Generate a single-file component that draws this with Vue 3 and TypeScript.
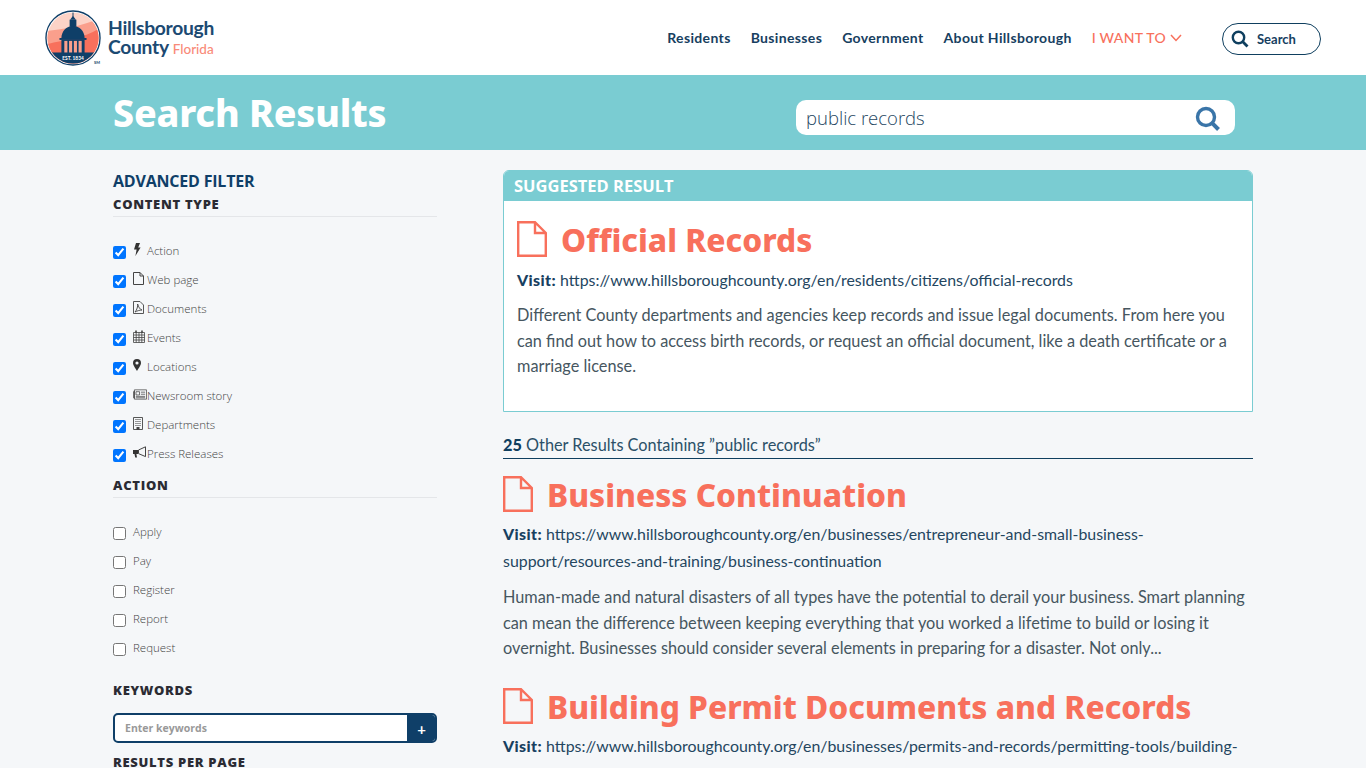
<script setup lang="ts">
const contentTypes = [
  { label: 'Action', icon: 'bolt' },
  { label: 'Web page', icon: 'file' },
  { label: 'Documents', icon: 'pdf' },
  { label: 'Events', icon: 'cal' },
  { label: 'Locations', icon: 'pin' },
  { label: 'Newsroom story', icon: 'news' },
  { label: 'Departments', icon: 'bldg' },
  { label: 'Press Releases', icon: 'horn' },
]
const actions = ['Apply', 'Pay', 'Register', 'Report', 'Request']
const nav = ['Residents', 'Businesses', 'Government', 'About Hillsborough']
</script>

<template>
  <div class="page">
    <header class="top">
      <div class="logo">
        <svg class="seal" width="56" height="56" viewBox="0 0 58 58">
          <defs>
            <clipPath id="sealClip"><circle cx="29" cy="29" r="26.5" /></clipPath>
          </defs>
          <circle cx="29" cy="29" r="28" fill="#fff" stroke="#0f3f68" stroke-width="1.4" />
          <g clip-path="url(#sealClip)">
            <rect x="0" y="0" width="58" height="58" fill="#fcd3c7" />
            <path d="M0 22C16 20 36 18 58 8V58H0Z" fill="#fa9f8c" />
            <path d="M0 36C20 30 40 30 58 18V58H0Z" fill="#f8705c" />
            <rect x="0" y="44" width="58" height="15" fill="#0f3f68" />
            <path d="M17 29C17 22 22 17 29 16C36 17 41 22 41 29Z" fill="#0f3f68" />
            <rect x="25.5" y="10" width="7" height="7" fill="#0f3f68" />
            <path d="M26 10L29 6L32 10Z" fill="#0f3f68" />
            <rect x="28.5" y="2" width="1" height="5" fill="#0f3f68" />
            <rect x="15" y="29" width="28" height="2" fill="#0f3f68" />
            <rect x="17" y="31" width="24" height="14" fill="#0f3f68" />
            <rect x="20" y="32" width="3.2" height="12" fill="#fa9f8c" />
            <rect x="24.9" y="32" width="3.2" height="12" fill="#fa9f8c" />
            <rect x="29.9" y="32" width="3.2" height="12" fill="#fa9f8c" />
            <rect x="34.8" y="32" width="3.2" height="12" fill="#fa9f8c" />
          </g>
          <text x="29" y="51.5" text-anchor="middle" font-size="5" font-weight="700" fill="#fff" font-family="Lato, sans-serif">EST. 1834</text>
        </svg>
        <span class="tm">SM</span>
        <div class="wordmark">
          <div>Hillsborough</div>
          <div>County <span class="fl">Florida</span></div>
        </div>
      </div>
      <nav class="nav">
        <a v-for="n in nav" :key="n" class="nav-link">{{ n }}</a>
        <a class="nav-want">I WANT TO
          <svg width="12" height="8" viewBox="0 0 12 8"><path d="M1 1L6 6.5L11 1" fill="none" stroke="#f8705c" stroke-width="1.5" /></svg>
        </a>
        <div class="pill">
          <svg width="18" height="18" viewBox="0 0 18 18"><circle cx="7.5" cy="7.5" r="5.7" fill="none" stroke="#0f3f5f" stroke-width="2.4" /><path d="M11.8 11.8L16.5 16.5" stroke="#0f3f5f" stroke-width="2.8" /></svg>
          <span>Search</span>
        </div>
      </nav>
    </header>

    <section class="band">
      <h1>Search Results</h1>
      <div class="bigsearch">
        <span>public records</span>
        <svg width="26" height="26" viewBox="0 0 26 26"><circle cx="11" cy="11" r="8.5" fill="none" stroke="#3a75a8" stroke-width="3.4" /><path d="M17.2 17.2L23.5 23.5" stroke="#3a75a8" stroke-width="4" /></svg>
      </div>
    </section>

    <div class="body">
      <aside class="side">
        <div class="adv">ADVANCED FILTER</div>
        <div class="sect">CONTENT TYPE</div>
        <div class="list first">
          <label v-for="c in contentTypes" :key="c.label" class="row">
            <input type="checkbox" checked />
            <span class="ic">
              <svg v-if="c.icon === 'bolt'" width="8" height="13" viewBox="0 0 8 13"><path d="M3 0H7L5.2 4.5H7.6L2.4 13L3.6 6.6H1Z" fill="#333" /></svg>
              <svg v-else-if="c.icon === 'file'" width="11" height="13" viewBox="0 0 11 13"><path d="M.5.5H7L10.5 4V12.5H.5ZM7 .5V4H10.5" fill="none" stroke="#444" /></svg>
              <svg v-else-if="c.icon === 'pdf'" width="11" height="13" viewBox="0 0 11 13"><path d="M.5.5H7L10.5 4V12.5H.5ZM2 11C4 9 5 5 4.6 3C5.5 6 7 8.5 9 9C6.5 9 4 10 2 11Z" fill="none" stroke="#444" stroke-width=".9" /></svg>
              <svg v-else-if="c.icon === 'cal'" width="12" height="13" viewBox="0 0 12 13"><path d="M.5 2.5H11.5V12.5H.5ZM.5 5H11.5M.5 7.5H11.5M.5 10H11.5M3.2 2.5V12.5M6 2.5V12.5M8.8 2.5V12.5" fill="none" stroke="#444" stroke-width=".8" /><path d="M3 .5V3M9 .5V3" stroke="#444" stroke-width="1.6" /></svg>
              <svg v-else-if="c.icon === 'pin'" width="8" height="12" viewBox="0 0 8 12"><path fill-rule="evenodd" d="M4 0A4 4 0 0 1 8 4C8 6.5 5 10 4 12C3 10 0 6.5 0 4A4 4 0 0 1 4 0ZM4 2.4A1.6 1.6 0 1 0 4 5.6A1.6 1.6 0 1 0 4 2.4Z" fill="#333" /></svg>
              <svg v-else-if="c.icon === 'news'" width="15" height="11" viewBox="0 0 15 11"><path d="M1.5 1.5V9.5A1 1 0 0 1 .5 8.5V2.5H1.5M1.5.5H14.5V10.5H1.5ZM3.2 2.5H7V6H3.2ZM8.5 3H13M8.5 5.2H13M3 7.5H13M3 9H13" fill="none" stroke="#444" stroke-width=".8" /></svg>
              <svg v-else-if="c.icon === 'bldg'" width="10" height="13" viewBox="0 0 10 13"><path d="M.5.5H9.5V12.5H.5ZM2.4 2.5H3.6M4.4 2.5H5.6M6.4 2.5H7.6M2.4 4.5H3.6M4.4 4.5H5.6M6.4 4.5H7.6M2.4 6.5H3.6M4.4 6.5H5.6M6.4 6.5H7.6M2.4 8.5H3.6M4.4 8.5H5.6M6.4 8.5H7.6" fill="none" stroke="#444" stroke-width=".9" /><rect x="3.5" y="10" width="3" height="3" fill="#444" /></svg>
              <svg v-else width="14" height="12" viewBox="0 0 14 12"><path d="M0 4H5V8H3.4L4 11.5H2.2L1.5 8H0Z" fill="#333" /><path d="M5.5 4L12.5 .8V10.6L5.5 7.6Z" fill="none" stroke="#444" /></svg>
            </span>
            <span class="lbl">{{ c.label }}</span>
          </label>
        </div>
        <div class="sect">ACTION</div>
        <div class="list second">
          <label v-for="a in actions" :key="a" class="row">
            <input type="checkbox" />
            <span class="lbl">{{ a }}</span>
          </label>
        </div>
        <div class="sect plain kw">KEYWORDS</div>
        <div class="kwbox">
          <div class="kwin">Enter keywords</div>
          <div class="kwbtn">+</div>
        </div>
        <div class="sect plain rpp">RESULTS PER PAGE</div>
      </aside>

      <main class="main">
        <div class="card">
          <div class="card-head">SUGGESTED RESULT</div>
          <div class="card-body">
            <div class="title">
              <svg class="doc" width="30" height="36" viewBox="0 0 30 36"><path d="M1.2 1.2H18L28.8 12V34.8H1.2ZM18 1.2V12H28.8" fill="none" stroke="#f8705c" stroke-width="2.4" /></svg>
              <h2>Official Records</h2>
            </div>
            <p class="visit"><b>Visit:</b> https://www.hillsboroughcounty.org/en/residents/citizens/official-records</p>
            <p class="desc">Different County departments and agencies keep records and issue legal documents. From here you can find out how to access birth records, or request an official document, like a death certificate or a marriage license.</p>
          </div>
        </div>

        <div class="count"><b>25</b> Other Results Containing ”public records”</div>

        <article class="result">
          <div class="title">
            <svg class="doc" width="30" height="36" viewBox="0 0 30 36"><path d="M1.2 1.2H18L28.8 12V34.8H1.2ZM18 1.2V12H28.8" fill="none" stroke="#f8705c" stroke-width="2.4" /></svg>
            <h2>Business Continuation</h2>
          </div>
          <p class="visit"><b>Visit:</b> https://www.hillsboroughcounty.org/en/businesses/entrepreneur-and-small-business-<br />support/resources-and-training/business-continuation</p>
          <p class="desc">Human-made and natural disasters of all types have the potential to derail your business. Smart planning can mean the difference between keeping everything that you worked a lifetime to build or losing it overnight. Businesses should consider several elements in preparing for a disaster. Not only...</p>
        </article>

        <article class="result next">
          <div class="title">
            <svg class="doc" width="30" height="36" viewBox="0 0 30 36"><path d="M1.2 1.2H18L28.8 12V34.8H1.2ZM18 1.2V12H28.8" fill="none" stroke="#f8705c" stroke-width="2.4" /></svg>
            <h2>Building Permit Documents and Records</h2>
          </div>
          <p class="visit"><b>Visit:</b> https://www.hillsboroughcounty.org/en/businesses/permits-and-records/permitting-tools/building-<br />permit-documents-and-records</p>
        </article>
      </main>
    </div>
  </div>
</template>

<style>
html, body { margin: 0; overflow: hidden; background: #f5f7f9; }
</style>

<style scoped>
.page { width: 1366px; height: 768px; overflow: hidden; background: #f5f7f9; font-family: Lato, "Open Sans", sans-serif; color: #0f3f5f; }
.top { height: 75px; background: #fff; display: flex; align-items: center; justify-content: space-between; padding: 0 45px; box-sizing: border-box; }
.logo { display: flex; align-items: center; position: relative; margin-top: 3px; }
.seal { display: block; margin-top: -3px; }
.tm { position: absolute; left: 49px; top: 47px; font-size: 4px; font-weight: 700; color: #0f3f68; }
.wordmark { margin: -2px 0 0 7px; font-size: 19.3px; line-height: 19px; font-weight: 700; color: #1c4a72; letter-spacing: -.3px; }
.fl { font-size: 13.5px; color: #f98a78; font-weight: 500; letter-spacing: 0; }
.nav { display: flex; align-items: center; }
.nav-link { font-size: 14px; font-weight: 700; color: #17405f; margin-right: 20px; letter-spacing: .35px; }
.nav-want { font-size: 14px; font-weight: 500; color: #f8705c; letter-spacing: .3px; display: flex; align-items: center; gap: 4px; margin-right: 40px; }
.pill { width: 99px; height: 32px; margin-top: 2px; box-sizing: border-box; border: 1.5px solid #0f3f5f; border-radius: 16px; display: flex; align-items: center; padding-left: 8px; gap: 8px; font-size: 13px; font-weight: 700; color: #17405f; }
.band { height: 75px; background: #7accd2; display: flex; align-items: center; padding: 0 131px 0 113px; justify-content: space-between; }
h1 { margin: 0; font-size: 37.5px; font-weight: 800; color: #fff; font-family: "Noto Sans", sans-serif; letter-spacing: -.2px; }
.bigsearch { width: 439px; height: 35px; margin-top: 10px; background: #fff; border-radius: 10px; display: flex; align-items: center; justify-content: space-between; padding: 0 14px 0 10px; box-sizing: border-box; font-size: 18.5px; font-weight: 300; color: #24465f; font-family: "Open Sans", sans-serif; }
.bigsearch svg { margin-top: 3px; }
.body { display: flex; padding: 20px 113px 0; gap: 66px; }
.side { width: 324px; flex: none; }
.adv { font-size: 16px; font-weight: 700; color: #0f3f68; line-height: 22px; font-family: "Open Sans", sans-serif; letter-spacing: -.2px; }
.sect { font-size: 13px; font-weight: 800; color: #2b2b33; letter-spacing: .7px; line-height: 18px; padding: 3px 0 3px; border-bottom: 1px solid #e4e6e9; font-family: "Open Sans", sans-serif; }
.sect.plain { border-bottom: 0; }
.list.first { margin-top: 19px; margin-bottom: 5px; }
.list.second { margin-top: 19px; }
.row { display: flex; align-items: center; height: 29px; font-family: "Open Sans", sans-serif; font-size: 11.5px; font-weight: 300; color: #444; }
.row input { margin: 3px 7px 0 0; width: 13px; height: 13px; flex: none; }
.ic { width: 14px; display: flex; justify-content: flex-start; align-items: center; margin-top: -3px; }
.ic svg { display: block; }
.lbl { margin-top: 0; }
.kw { margin-top: 16px; }
.kwbox { display: flex; height: 30px; margin-top: 11px; border: 2px solid #0f3f68; border-radius: 5px; box-sizing: border-box; background: #fff; overflow: hidden; }
.kwin { flex: 1; padding: 0 10px; font-size: 10.5px; font-weight: 700; color: #999; line-height: 26px; font-family: "Open Sans", sans-serif; }
.kwbtn { width: 28px; background: #0f3f68; color: #fff; font-size: 15px; font-weight: 700; text-align: center; line-height: 28px; padding-left: 1px; box-sizing: border-box; }
.rpp { margin-top: 7px; }
.main { width: 750px; flex: none; }
.card { border: 1px solid #7accd2; border-radius: 6px 6px 0 0; background: #fff; height: 242px; box-sizing: border-box; }
.card-head { height: 30px; background: #7accd2; color: #fff; font-size: 16.5px; font-weight: 700; line-height: 30px; padding-left: 10px; border-radius: 5px 5px 0 0; font-family: "Open Sans", sans-serif; letter-spacing: 0; }
.card-body { padding: 20px 13px 0; }
.title { display: flex; align-items: center; gap: 14px; height: 36px; }
.doc { flex: none; }
h2 { margin: 0; padding-top: 2px; font-size: 31.7px; font-weight: 800; color: #f8705c; font-family: "Noto Sans", sans-serif; line-height: 36px; }
.visit { margin: 9px 0 0; font-size: 15.9px; line-height: 27px; color: #24465f; font-weight: 400; white-space: nowrap; }
.result .visit { margin-top: 8px; }
.visit b { font-weight: 900; color: #17405f; letter-spacing: .4px; }
.desc { margin: 9px 0 0; font-size: 16.3px; line-height: 25.7px; color: #46565f; }
.result .desc { margin-top: 10px; }
.count { margin-top: 23px; height: 23px; border-bottom: 1px solid #0f3f5f; font-size: 16.3px; line-height: 20px; color: #2b5068; }
.count b { font-weight: 900; color: #0f3f5f; }
.result { margin-top: 17px; }
.result.next { margin-top: 27px; }
</style>
